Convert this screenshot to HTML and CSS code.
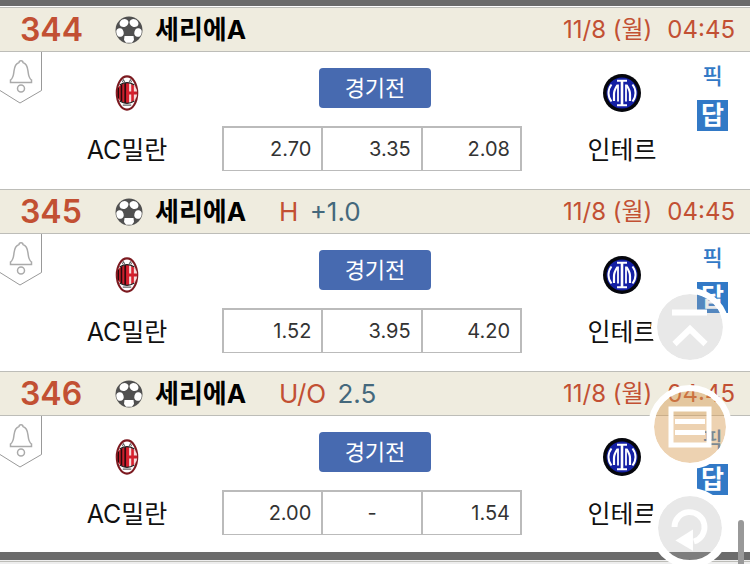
FILE: index.html
```
<!DOCTYPE html>
<html lang="ko">
<head>
  <meta charset="UTF-8">
  <meta name="viewport" content="width=device-width, initial-scale=1">
  <title>세리에A 경기 목록</title>
  <link rel="stylesheet" href="styles.css">
</head>
<body>
  <!-- shared icons -->
  <svg class="sprite" aria-hidden="true">
    <symbol id="ball" viewBox="0 0 28 28">
      <circle cx="14" cy="14" r="13.5" fill="#505050"/>
      <g fill="#fff">
        <ellipse cx="9" cy="7" rx="4.600" ry="3.800" transform="rotate(-25 9 7)"/>
        <ellipse cx="19" cy="7" rx="4.600" ry="3.800" transform="rotate(25 19 7)"/>
        <ellipse cx="5" cy="16.500" rx="3.600" ry="4.300" transform="rotate(-15 5 16.500)"/>
        <ellipse cx="23" cy="16.500" rx="3.600" ry="4.300" transform="rotate(15 23 16.500)"/>
        <path d="M9.500 20h9l.5 4-2 2.800h-6l-2-2.800z"/>
      </g>
    </symbol>
    <symbol id="bell" viewBox="0 0 42 52">
      <path d="M0 38.500L20 51 41.500 38.500V0" fill="#fff" stroke="#999"/>
      <path d="M10.500 30.500h21v-2.500c-3-2-3-5-3.500-9-.5-4.500-2-7.500-5-8.500 0-2.500-4-2.500-4 0-3 1-4.500 4-5 8.500-.5 4-.5 7-3.500 9z" fill="none" stroke="#aaa" stroke-width="1.500"/>
      <circle cx="21" cy="36.500" r="3.500" fill="none" stroke="#aaa" stroke-width="1.500"/>
    </symbol>
    <symbol id="milan" viewBox="0 0 24 36">
      <clipPath id="milanDisc"><circle cx="12" cy="18" r="9.800"/></clipPath>
      <ellipse cx="12" cy="18" rx="9.700" ry="15.700" fill="#fff" stroke="#7c1a20" stroke-width="2"/>
      <g clip-path="url(#milanDisc)">
        <path d="M1 6h22v24H1z" fill="#c81f2c"/>
        <path d="M3 6h1.500v24H3zM6 6h1.500v24H6zM9.500 6H11v24H9.500z" fill="#26090b"/>
        <path d="M12 8h11v8.500H12zM12 19.500h11v8.500H12z" fill="#f3dcdc"/>
        <path d="M12 8h2v20h-2zM16 8h2.500v20H16z" fill="#d9202e"/>
      </g>
      <path d="M5 10.500Q12 6 19 10.500M5 25.500Q12 30 19 25.500" fill="none" stroke="#222" stroke-width="1.200"/>
      <path d="M7.500 7.500l1.200-2 1.200 2M14 7.500l1.200-2 1.200 2M8 29.500h8" fill="none" stroke="#666" stroke-width="1"/>
    </symbol>
    <symbol id="inter" viewBox="0 0 38 38">
      <circle cx="19" cy="19" r="19" fill="#05060c"/>
      <circle cx="19" cy="19" r="15.500" fill="#1420a4"/>
      <g fill="none" stroke="#fff">
        <path d="M19 7v24" stroke-width="2.600"/>
        <path d="M14 6.800h10M14 31.200h10" stroke-width="2"/>
        <path d="M15 10.500v17M23 10.500v17" stroke-width="1.800"/>
        <path d="M14.500 11c-2 3-3.500 6-3.500 9v7M23.500 11c2 3 3.500 6 3.500 9v7" stroke-width="2.200"/>
        <path d="M8.500 10.500c-4 5-4 12 0 17M29.500 10.500c4 5 4 12 0 17" stroke-width="2"/>
      </g>
    </symbol>
  </svg>

  <main class="match-list">
    <article class="match">
      <header class="match-header">
        <span class="match-no">344</span>
        <svg class="ball"><use href="#ball"/></svg>
        <h2 class="league">세리에A</h2>
        <time class="kickoff"><span>11/8 (월)</span><span>04:45</span></time>
      </header>
      <div class="match-body">
        <button class="alarm" aria-label="알림"><svg><use href="#bell"/></svg></button>
        <div class="team">
          <svg class="crest"><use href="#milan"/></svg>
          <span>AC밀란</span>
        </div>
        <div class="center">
          <button class="status">경기전</button>
          <table class="odds"><tr><td>2.70</td><td>3.35</td><td>2.08</td></tr></table>
        </div>
        <div class="team">
          <svg class="crest"><use href="#inter"/></svg>
          <span>인테르</span>
        </div>
        <div class="links">
          <a href="#" class="pick">픽</a>
          <a href="#" class="answer">답</a>
        </div>
      </div>
    </article>

    <article class="match">
      <header class="match-header">
        <span class="match-no">345</span>
        <svg class="ball"><use href="#ball"/></svg>
        <h2 class="league">세리에A</h2>
        <span class="market">H <b>+1.0</b></span>
        <time class="kickoff"><span>11/8 (월)</span><span>04:45</span></time>
      </header>
      <div class="match-body">
        <button class="alarm" aria-label="알림"><svg><use href="#bell"/></svg></button>
        <div class="team">
          <svg class="crest"><use href="#milan"/></svg>
          <span>AC밀란</span>
        </div>
        <div class="center">
          <button class="status">경기전</button>
          <table class="odds"><tr><td>1.52</td><td>3.95</td><td>4.20</td></tr></table>
        </div>
        <div class="team">
          <svg class="crest"><use href="#inter"/></svg>
          <span>인테르</span>
        </div>
        <div class="links">
          <a href="#" class="pick">픽</a>
          <a href="#" class="answer">답</a>
        </div>
      </div>
    </article>

    <article class="match">
      <header class="match-header">
        <span class="match-no">346</span>
        <svg class="ball"><use href="#ball"/></svg>
        <h2 class="league">세리에A</h2>
        <span class="market">U/O <b>2.5</b></span>
        <time class="kickoff"><span>11/8 (월)</span><span>04:45</span></time>
      </header>
      <div class="match-body">
        <button class="alarm" aria-label="알림"><svg><use href="#bell"/></svg></button>
        <div class="team">
          <svg class="crest"><use href="#milan"/></svg>
          <span>AC밀란</span>
        </div>
        <div class="center">
          <button class="status">경기전</button>
          <table class="odds"><tr><td>2.00</td><td class="none">-</td><td>1.54</td></tr></table>
        </div>
        <div class="team">
          <svg class="crest"><use href="#inter"/></svg>
          <span>인테르</span>
        </div>
        <div class="links">
          <a href="#" class="pick">픽</a>
          <a href="#" class="answer">답</a>
        </div>
      </div>
    </article>
  </main>
  <footer class="list-end"></footer>

  <!-- floating buttons -->
  <nav class="floating">
    <button class="fab fab-top" aria-label="맨 위로">
      <svg viewBox="0 0 66 66" fill="none" stroke="#fff" stroke-width="6"><path d="M15 18.500h35M17.500 50L33 35l15.500 15"/></svg>
    </button>
    <button class="fab fab-list" aria-label="목록">
      <svg viewBox="0 0 72 72" fill="none" stroke="#fff" stroke-width="5"><path d="M17 18h38v36H17z"/><path d="M21 30.500h30M21 41.500h30"/></svg>
    </button>
    <button class="fab fab-reload" aria-label="새로고침">
      <svg viewBox="0 0 66 66"><path d="M17 32a15.500 15.500 0 1 1 20 15" fill="none" stroke="#fff" stroke-width="6"/><path d="M18 46L36 34.500v22z" fill="#fff"/></svg>
    </button>
  </nav>
  <div class="scroll-thumb"></div>
</body>
</html>
```
FILE: styles.css
```
* {
  margin: 0;
  padding: 0;
  box-sizing: border-box;
}
body {
  font-family: Inter, "Noto Sans CJK KR", sans-serif;
  background-color: #eeeeee;
  color: #111111;
  overflow-x: hidden;
}
button {
  border: none;
  background: none;
  font-family: inherit;
  cursor: pointer;
}
a {
  text-decoration: none;
}
.sprite {
  position: absolute;
  width: 0;
  height: 0;
}

.match-list {
  background-color: #ffffff;
  border-top: 6px solid #6b6b6b;
  border-bottom: 8px solid #6b6b6b;
  padding-top: 1px;
}
.match-header {
  display: flex;
  align-items: center;
  height: 45px;
  padding: 0 15px 0 20px;
  background-color: #efecdf;
  border-top: 1px solid #bdbdb8;
  border-bottom: 1px solid #bdbdb8;
  font-size: 24px;
  line-height: 43px;
  white-space: nowrap;
}
.match-no {
  width: 95px;
  color: #c25033;
  font-size: 32px;
  font-weight: 600;
}
.ball {
  width: 28px;
  height: 28px;
  margin-right: 12px;
}
.league {
  width: 124px;
  color: #000000;
  font-size: 26px;
  font-weight: 700;
}
.market {
  color: #c25033;
  font-size: 26px;
}
.market b {
  margin-left: 4px;
  color: #44687c;
  font-weight: 400;
}
.kickoff {
  display: flex;
  gap: 15px;
  margin-left: auto;
  color: #c25033;
}

.match-body {
  display: grid;
  grid-template-columns: 42px 170fr 338px 144fr 56px;
  height: 137px;
}
.match:last-child .match-body {
  height: 136px;
}
.alarm {
  width: 42px;
  height: 52px;
}
.alarm svg {
  display: block;
  width: 42px;
  height: 52px;
}
.team {
  display: flex;
  flex-direction: column;
  align-items: center;
  gap: 20px;
  padding-top: 22px;
  font-size: 25px;
  line-height: 36px;
  white-space: nowrap;
}
.crest {
  width: 38px;
  height: 38px;
}
.center {
  display: flex;
  flex-direction: column;
  align-items: center;
  gap: 18px;
  padding: 16px 28px 0 10px;
}
.status {
  width: 112px;
  height: 40px;
  margin-left: 6px;
  border-radius: 4px;
  background-color: #476ab0;
  color: #ffffff;
  font-size: 22px;
  line-height: 40px;
}
.odds {
  width: 100%;
  table-layout: fixed;
  border-collapse: collapse;
}
.odds td {
  height: 43px;
  padding-right: 10px;
  border: 2px solid #bbbbbb;
  border-bottom-width: 1px;
  color: #333333;
  font-size: 20px;
  text-align: right;
}
.odds .none {
  padding-right: 0;
  text-align: center;
}
.links {
  display: flex;
  flex-direction: column;
  align-items: flex-start;
  gap: 8px;
  padding: 8px 0 0 3px;
  font-size: 22px;
  line-height: 32px;
  text-align: center;
}
.links a {
  width: 31px;
  color: #3279c6;
  font-weight: 500;
}
.links .answer {
  height: 31px;
  background-color: #3279c6;
  color: #ffffff;
  font-size: 25px;
  font-weight: 700;
  line-height: 31px;
}
.list-end {
  height: 4px;
  border-top: 1px solid #bdbdb8;
  margin-top: 1px;
}

.floating {
  position: fixed;
  right: 18px;
  bottom: -4px;
  display: flex;
  flex-direction: column;
  align-items: center;
  gap: 19px;
}
.fab {
  border: 6px solid #ffffff;
  border-radius: 50%;
  background-color: rgba(174, 174, 174, 0.28);
  background-clip: padding-box;
}
.fab svg {
  display: block;
  width: 100%;
  height: 100%;
}
.fab-top {
  width: 78px;
  height: 78px;
}
.fab-list {
  width: 84px;
  height: 84px;
  background-color: rgba(215, 155, 83, 0.45);
}
.fab-reload {
  width: 80px;
  height: 80px;
  border-width: 8px;
}
.scroll-thumb {
  position: fixed;
  right: 6px;
  bottom: -4px;
  width: 6px;
  height: 48px;
  border-radius: 3px;
  background-color: #999999;
}
```
